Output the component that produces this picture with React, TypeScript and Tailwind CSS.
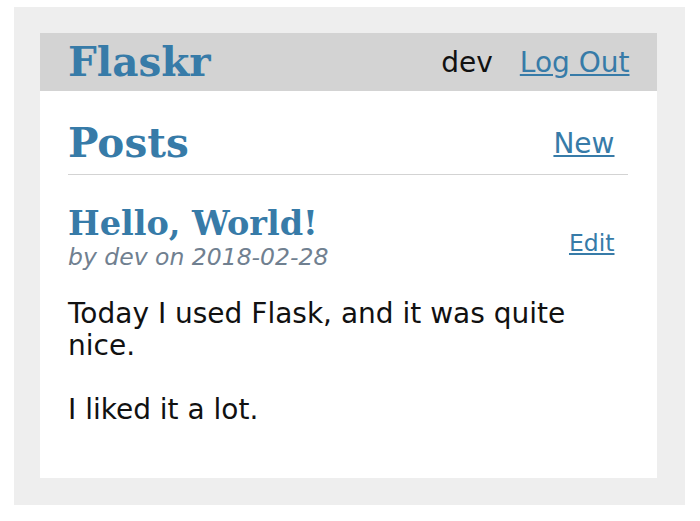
const sans = "font-['DejaVu_Sans',sans-serif]";
const serif = "font-['DejaVu_Serif',serif]";

export default function App() {
  return (
    <div className={`min-h-[521px] bg-white pt-[7px] pl-[14px] ${sans}`}>
      <div className="w-[671px] h-[498px] bg-[#eee] pt-[26px] pl-[26px] pr-[28px] pb-[27px]">
        <div className="bg-white h-full flex flex-col">
          <nav className="h-[58px] bg-[#d3d3d3] flex items-center px-[14px]">
            <h1 className={`flex-auto text-[40.5px] leading-[normal] font-bold text-[#377ba8] ${serif}`}>
              <a href="#" className="px-[14px]">
                Flaskr
              </a>
            </h1>
            <ul className="flex text-[28px] leading-[normal]">
              <li>
                <span className="block px-[13.5px] text-[#111]">dev</span>
              </li>
              <li>
                <a href="#" className="block px-[13.5px] text-[#377ba8] underline">
                  Log Out
                </a>
              </li>
            </ul>
          </nav>

          <section className="pl-[28px] pr-[29px]">
            <header className="flex items-end border-b border-[#d3d3d3]">
              <h1 className={`flex-auto mt-[27.5px] mb-[7px] text-[40.5px] leading-[normal] font-bold text-[#377ba8] ${serif}`}>
                Posts
              </h1>
              <a href="#" className="block p-[13.5px] text-[28px] leading-[normal] text-[#377ba8] underline">
                New
              </a>
            </header>

            <article>
              <header className="flex items-end text-[23.5px] leading-[normal] mt-[29px]">
                <div className="flex-auto">
                  <h1 className={`text-[33.5px] leading-[normal] font-bold text-[#377ba8] ${serif}`}>
                    Hello, World!
                  </h1>
                  <div className="italic text-[#708090]">by dev on 2018-02-28</div>
                </div>
                <a href="#" className="block p-[13.5px] text-[#377ba8] underline">
                  Edit
                </a>
              </header>
              <p className="mt-[27px] text-[28px] leading-[32px] text-[#111] whitespace-pre-line">
                {"Today I used Flask, and it was quite nice.\n\nI liked it a lot."}
              </p>
            </article>
          </section>
        </div>
      </div>
    </div>
  );
}
